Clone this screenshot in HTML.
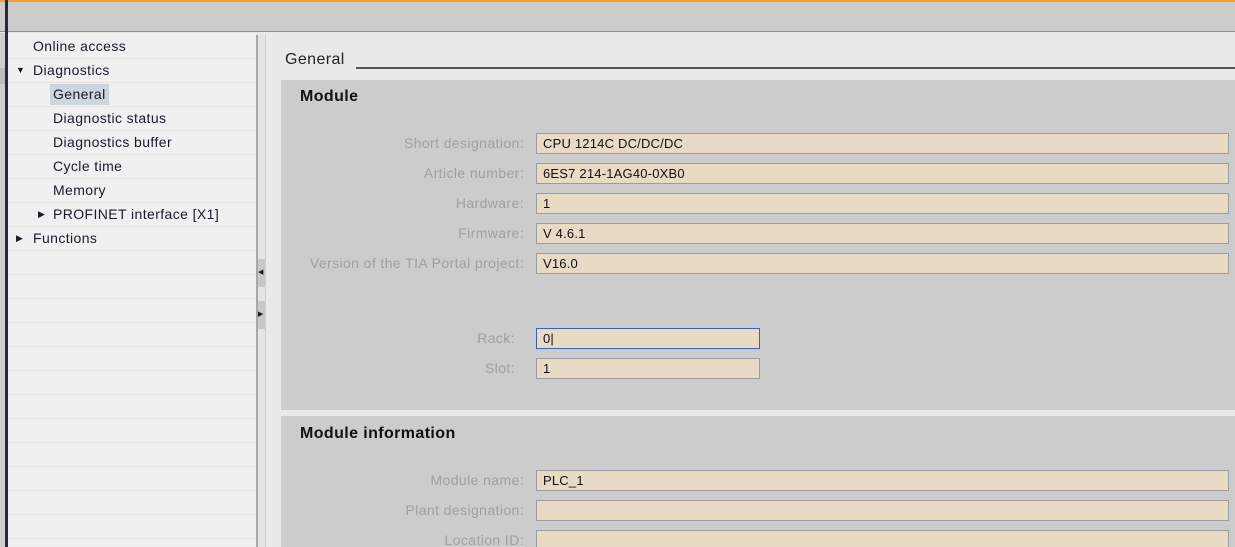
<!DOCTYPE html>
<html><head><style>
*{margin:0;padding:0;box-sizing:border-box}
html,body{width:1235px;height:547px;overflow:hidden}
body{background:#e9e9e9;font-family:"Liberation Sans",sans-serif;font-size:14px;letter-spacing:0.4px;color:#1a1a2a;position:relative}
.a{position:absolute}
.row{position:absolute;left:8px;width:248px;height:24px;border-bottom:1px solid #e6e6e6;line-height:23px}
.lbl{position:absolute;text-align:right;color:#a0a0a0;font-size:14px;width:330px;left:194px}
.f{position:absolute;left:536px;width:693px;height:21px;background:#e8dac4;border:1px solid #9c9c9c;padding-left:6px;line-height:19px;font-size:13px;letter-spacing:0.2px;color:#111}
</style></head><body>
<div class="a" style="left:0;top:0;width:1235px;height:2px;background:#f5a020"></div>
<div class="a" style="left:0;top:2px;width:1235px;height:30px;background:#cdcdcd;border-bottom:1px solid #8f8f8f"></div>
<div class="a" style="left:0;top:33px;width:5px;height:514px;background:#cfcfcf"></div>
<div class="a" style="left:0;top:68px;width:5px;height:16px;background:#bdbdbd"></div>
<div class="a" style="left:5px;top:0;width:3px;height:547px;background:#252a38"></div>
<div class="a" style="left:8px;top:33px;width:248px;height:514px;background:#f0f0f0"></div>
<div class="row" style="top:35px;padding-left:25px">Online access</div>
<div class="row" style="top:59px;padding-left:25px"><span class="a" style="left:8px;top:0;font-size:9px">&#9660;</span>Diagnostics</div>
<div class="row" style="top:83px;padding-left:42px"><span style="background:#cdd5de;padding:2px 3px 3px 3px">General</span></div>
<div class="row" style="top:107px;padding-left:45px">Diagnostic status</div>
<div class="row" style="top:131px;padding-left:45px">Diagnostics buffer</div>
<div class="row" style="top:155px;padding-left:45px">Cycle time</div>
<div class="row" style="top:179px;padding-left:45px">Memory</div>
<div class="row" style="top:203px;padding-left:45px"><span class="a" style="left:30px;top:0;font-size:9px">&#9654;</span>PROFINET interface [X1]</div>
<div class="row" style="top:227px;padding-left:25px"><span class="a" style="left:8px;top:0;font-size:9px">&#9654;</span>Functions</div>
<div class="row" style="top:251px"></div><div class="row" style="top:275px"></div><div class="row" style="top:299px"></div><div class="row" style="top:323px"></div><div class="row" style="top:347px"></div><div class="row" style="top:371px"></div><div class="row" style="top:395px"></div><div class="row" style="top:419px"></div><div class="row" style="top:443px"></div><div class="row" style="top:467px"></div><div class="row" style="top:491px"></div><div class="row" style="top:515px"></div>
<div class="a" style="left:256px;top:35px;width:10px;height:512px;background:#e4e4e4;border-left:2px solid #a8a8a8;border-right:1px solid #d0d0d0"></div>
<div class="a" style="left:258px;top:259px;width:7px;height:28px;background:#c8c8c8;font-size:7px;line-height:28px">&#9664;</div>
<div class="a" style="left:258px;top:301px;width:7px;height:28px;background:#c8c8c8;font-size:7px;line-height:28px">&#9654;</div>
<div class="a" style="left:285px;top:51px;font-size:16px;color:#222">General</div>
<div class="a" style="left:356px;top:67px;width:879px;height:2px;background:#555"></div>
<div class="a" style="left:281px;top:80px;width:954px;height:330px;background:#cccccc"></div>
<div class="a" style="left:281px;top:416px;width:954px;height:131px;background:#cccccc"></div>
<div class="a" style="left:300px;top:88px;font-size:16px;font-weight:bold;color:#111">Module</div>
<div class="a" style="left:300px;top:425px;font-size:16px;font-weight:bold;color:#111">Module information</div>
<div class="lbl" style="top:135px">Short designation:</div><div class="f" style="top:133px">CPU 1214C DC/DC/DC</div>
<div class="lbl" style="top:165px">Article number:</div><div class="f" style="top:163px">6ES7 214-1AG40-0XB0</div>
<div class="lbl" style="top:195px">Hardware:</div><div class="f" style="top:193px">1</div>
<div class="lbl" style="top:225px">Firmware:</div><div class="f" style="top:223px">V 4.6.1</div>
<div class="lbl" style="top:255px">Version of the TIA Portal project:</div><div class="f" style="top:253px">V16.0</div>
<div class="lbl" style="top:330px;left:185px">Rack:</div><div class="f" style="top:328px;width:224px;border-color:#3a5fc0">0|</div>
<div class="lbl" style="top:360px;left:185px">Slot:</div><div class="f" style="top:358px;width:224px">1</div>
<div class="lbl" style="top:472px">Module name:</div><div class="f" style="top:470px">PLC_1</div>
<div class="lbl" style="top:502px">Plant designation:</div><div class="f" style="top:500px"></div>
<div class="lbl" style="top:532px">Location ID:</div><div class="f" style="top:530px"></div>
</body></html>
